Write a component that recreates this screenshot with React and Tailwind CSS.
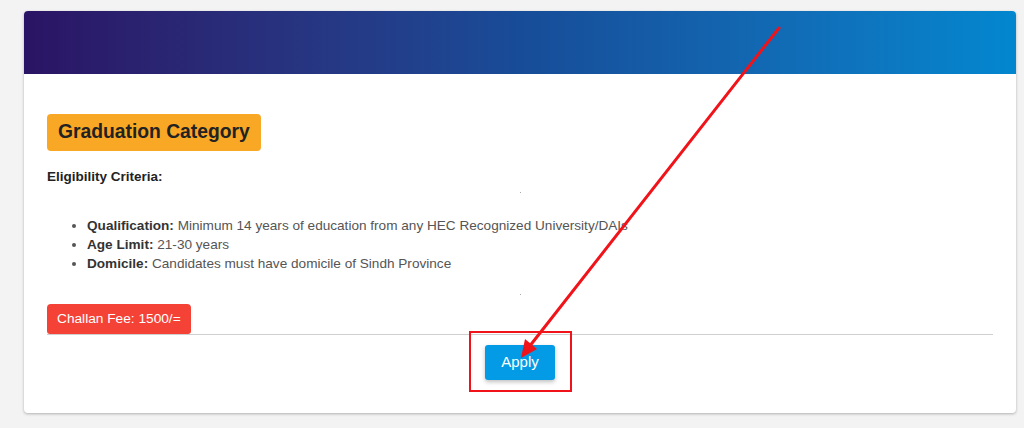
import React from "react"

const criteria = [
  { label: "Qualification:", text: "Minimum 14 years of education from any HEC Recognized University/DAIs" },
  { label: "Age Limit:", text: "21-30 years" },
  { label: "Domicile:", text: "Candidates must have domicile of Sindh Province" }
];

const Dot = () => (
  <div className="mx-auto h-[1px] w-[1px] bg-[#aaa]" />
);

const Annotation = () => (
  <>
    <div className="absolute left-[469px] top-[331px] h-[61px] w-[103px] border-2 border-[#f0141a] pointer-events-none" />
    <svg className="absolute left-0 top-0 pointer-events-none" width="1024" height="428" viewBox="0 0 1024 428">
      <line x1="779" y1="28" x2="529" y2="347" stroke="#f0141a" strokeWidth="3" strokeLinecap="round" />
      <polygon points="521,358 537,349 525,339" fill="#f0141a" />
    </svg>
  </>
);

const CategoryCard = () => {
  return (
    <div className="ml-[24px] mt-[11px] w-[992px] rounded-[4px] bg-white shadow-[0_1px_3px_rgba(0,0,0,0.28)]">
      <div className="h-[63px] rounded-t-[4px] bg-gradient-to-r from-[#2a1464] via-[#174c98] to-[#0287cf]" />
      <div className="px-[23px] pt-[40px] pb-[33px]">
        <div className="inline-flex h-[37px] items-center rounded-[4px] bg-[#f9a826] px-[11px] text-[19.3px] font-bold text-[#222]">
          Graduation Category
        </div>
        <div className="mt-[16px] text-[13.5px] font-bold leading-[19px] text-[#222]">
          Eligibility Criteria:
        </div>
        <div className="mt-[6px]"><Dot /></div>
        <ul className="mt-[23px] list-disc pl-[40px] text-[13.6px] leading-[19px] text-[#555]">
          { criteria.map(c => (
            <li key={ c.label }>
              <span className="font-bold text-[#333]">{ c.label }</span> { c.text }
            </li>
          )) }
        </ul>
        <div className="mt-[21px]"><Dot /></div>
        <div className="mt-[9px] inline-flex h-[30px] items-center rounded-t-[4px] rounded-b-[3px] bg-[#f44336] px-[10px] text-[13.7px] text-white">
          Challan Fee: 1500/=
        </div>
        <div className="border-t border-[#cfcfcf]" />
        <div className="mt-[10px] flex justify-center">
          <button className="h-[35px] w-[70px] rounded-[3px] bg-[#039be5] text-[15px] text-white shadow-[0_2px_4px_rgba(0,0,0,0.25)]">
            Apply
          </button>
        </div>
      </div>
    </div>
  )
}

export default function App() {
  return (
    <div className="relative h-[428px] w-[1024px] overflow-hidden bg-[#f3f3f3] font-['Liberation_Sans',Arial,sans-serif]">
      <div className="pt-px -mt-px">
        <CategoryCard />
      </div>
      <Annotation />
    </div>
  )
}
